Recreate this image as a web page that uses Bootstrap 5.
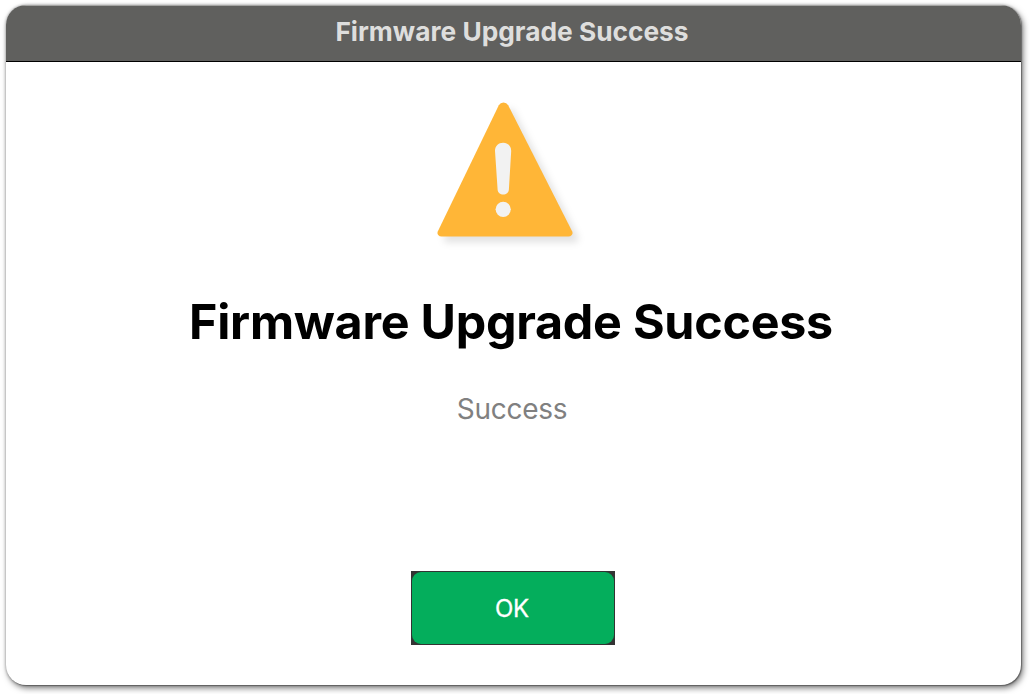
<!DOCTYPE html>
<html lang="en">
<head>
<meta charset="utf-8">
<meta name="viewport" content="width=device-width, initial-scale=1">
<title>Firmware Upgrade Success</title>
<link href="https://cdn.jsdelivr.net/npm/bootstrap@5.3.0/dist/css/bootstrap.min.css" rel="stylesheet">
<style>
body{font-family:Inter,sans-serif;background:#fff;padding:5px 9px 9px 6px;height:694px;overflow:hidden}
.dialog-window{border-radius:20px;background:#fff;box-shadow:0 0 3px #0005,1px 1px 1px #0004,2px 3px 6px #0008}
.title-strip{height:57px;background:#60605e;color:#dededd;border-top:1px solid #a5a5a3;border-bottom:1px solid #000;font-size:26.3px;font-weight:700;padding:0 3px 3px 0}
.dialog-content{padding-right:1px}
.warning-icon{margin-top:35px;width:160px;height:160px}
.headline{font-size:48.4px;letter-spacing:-.25px;font-weight:700;color:#000;line-height:60px;margin-top:35px;padding-right:4px}
.message{font-size:28px;letter-spacing:-.25px;color:#808080;line-height:36px;margin-top:39px;padding-right:2px}
.ok-frame{width:204px;height:74px;background:#333;padding:1px;margin-top:144px}
.ok-frame .btn{--bs-btn-bg:#04ae5c;--bs-btn-color:#fff;--bs-btn-hover-bg:#039b52;--bs-btn-hover-color:#fff;border:0;border-radius:9px;font-size:24px;padding:8px 14px 6px 12px;letter-spacing:-.2px;-webkit-text-stroke:.3px #fff}
</style>
</head>
<body>
<main class="dialog-window h-100 d-flex flex-column overflow-hidden">
<header class="title-strip d-flex align-items-center justify-content-center flex-shrink-0">Firmware Upgrade Success</header>
<section class="dialog-content d-flex flex-column align-items-center">
<svg class="warning-icon" viewBox="433 97 160 160" aria-hidden="true">
<defs><filter id="soft" x="-20%" y="-20%" width="140%" height="140%" color-interpolation-filters="sRGB"><feDropShadow dx="6" dy="6" stdDeviation="3.5" flood-color="#000" flood-opacity=".11"/></filter></defs>
<path filter="url(#soft)" fill="#ffb637" d="M498.8 105.2Q500.4 102.5 503.5 102.5T508.2 105.2L572.1 231.2Q573.2 233.5 571.8 235T568.5 236.6H441.5Q439.5 236.5 438.2 235T437.9 231.2Z"/>
<path fill="#f2f2f2" d="M495 151C495 146 498.5 142.8 503.1 142.8S511.2 146 511.2 151L508.9 189.5C508.6 192.8 506.2 194.6 503.2 194.6S497.8 192.8 497.6 189.5Z"/>
<circle cx="503.2" cy="209.3" r="7.6" fill="#f2f2f2"/>
</svg>
<h1 class="headline mb-0">Firmware Upgrade Success</h1>
<p class="message mb-0">Success</p>
<div class="ok-frame"><button class="btn w-100 h-100" type="button">OK</button></div>
</section>
</main>
<script src="https://cdn.jsdelivr.net/npm/bootstrap@5.3.0/dist/js/bootstrap.bundle.min.js"></script>
</body>
</html>
